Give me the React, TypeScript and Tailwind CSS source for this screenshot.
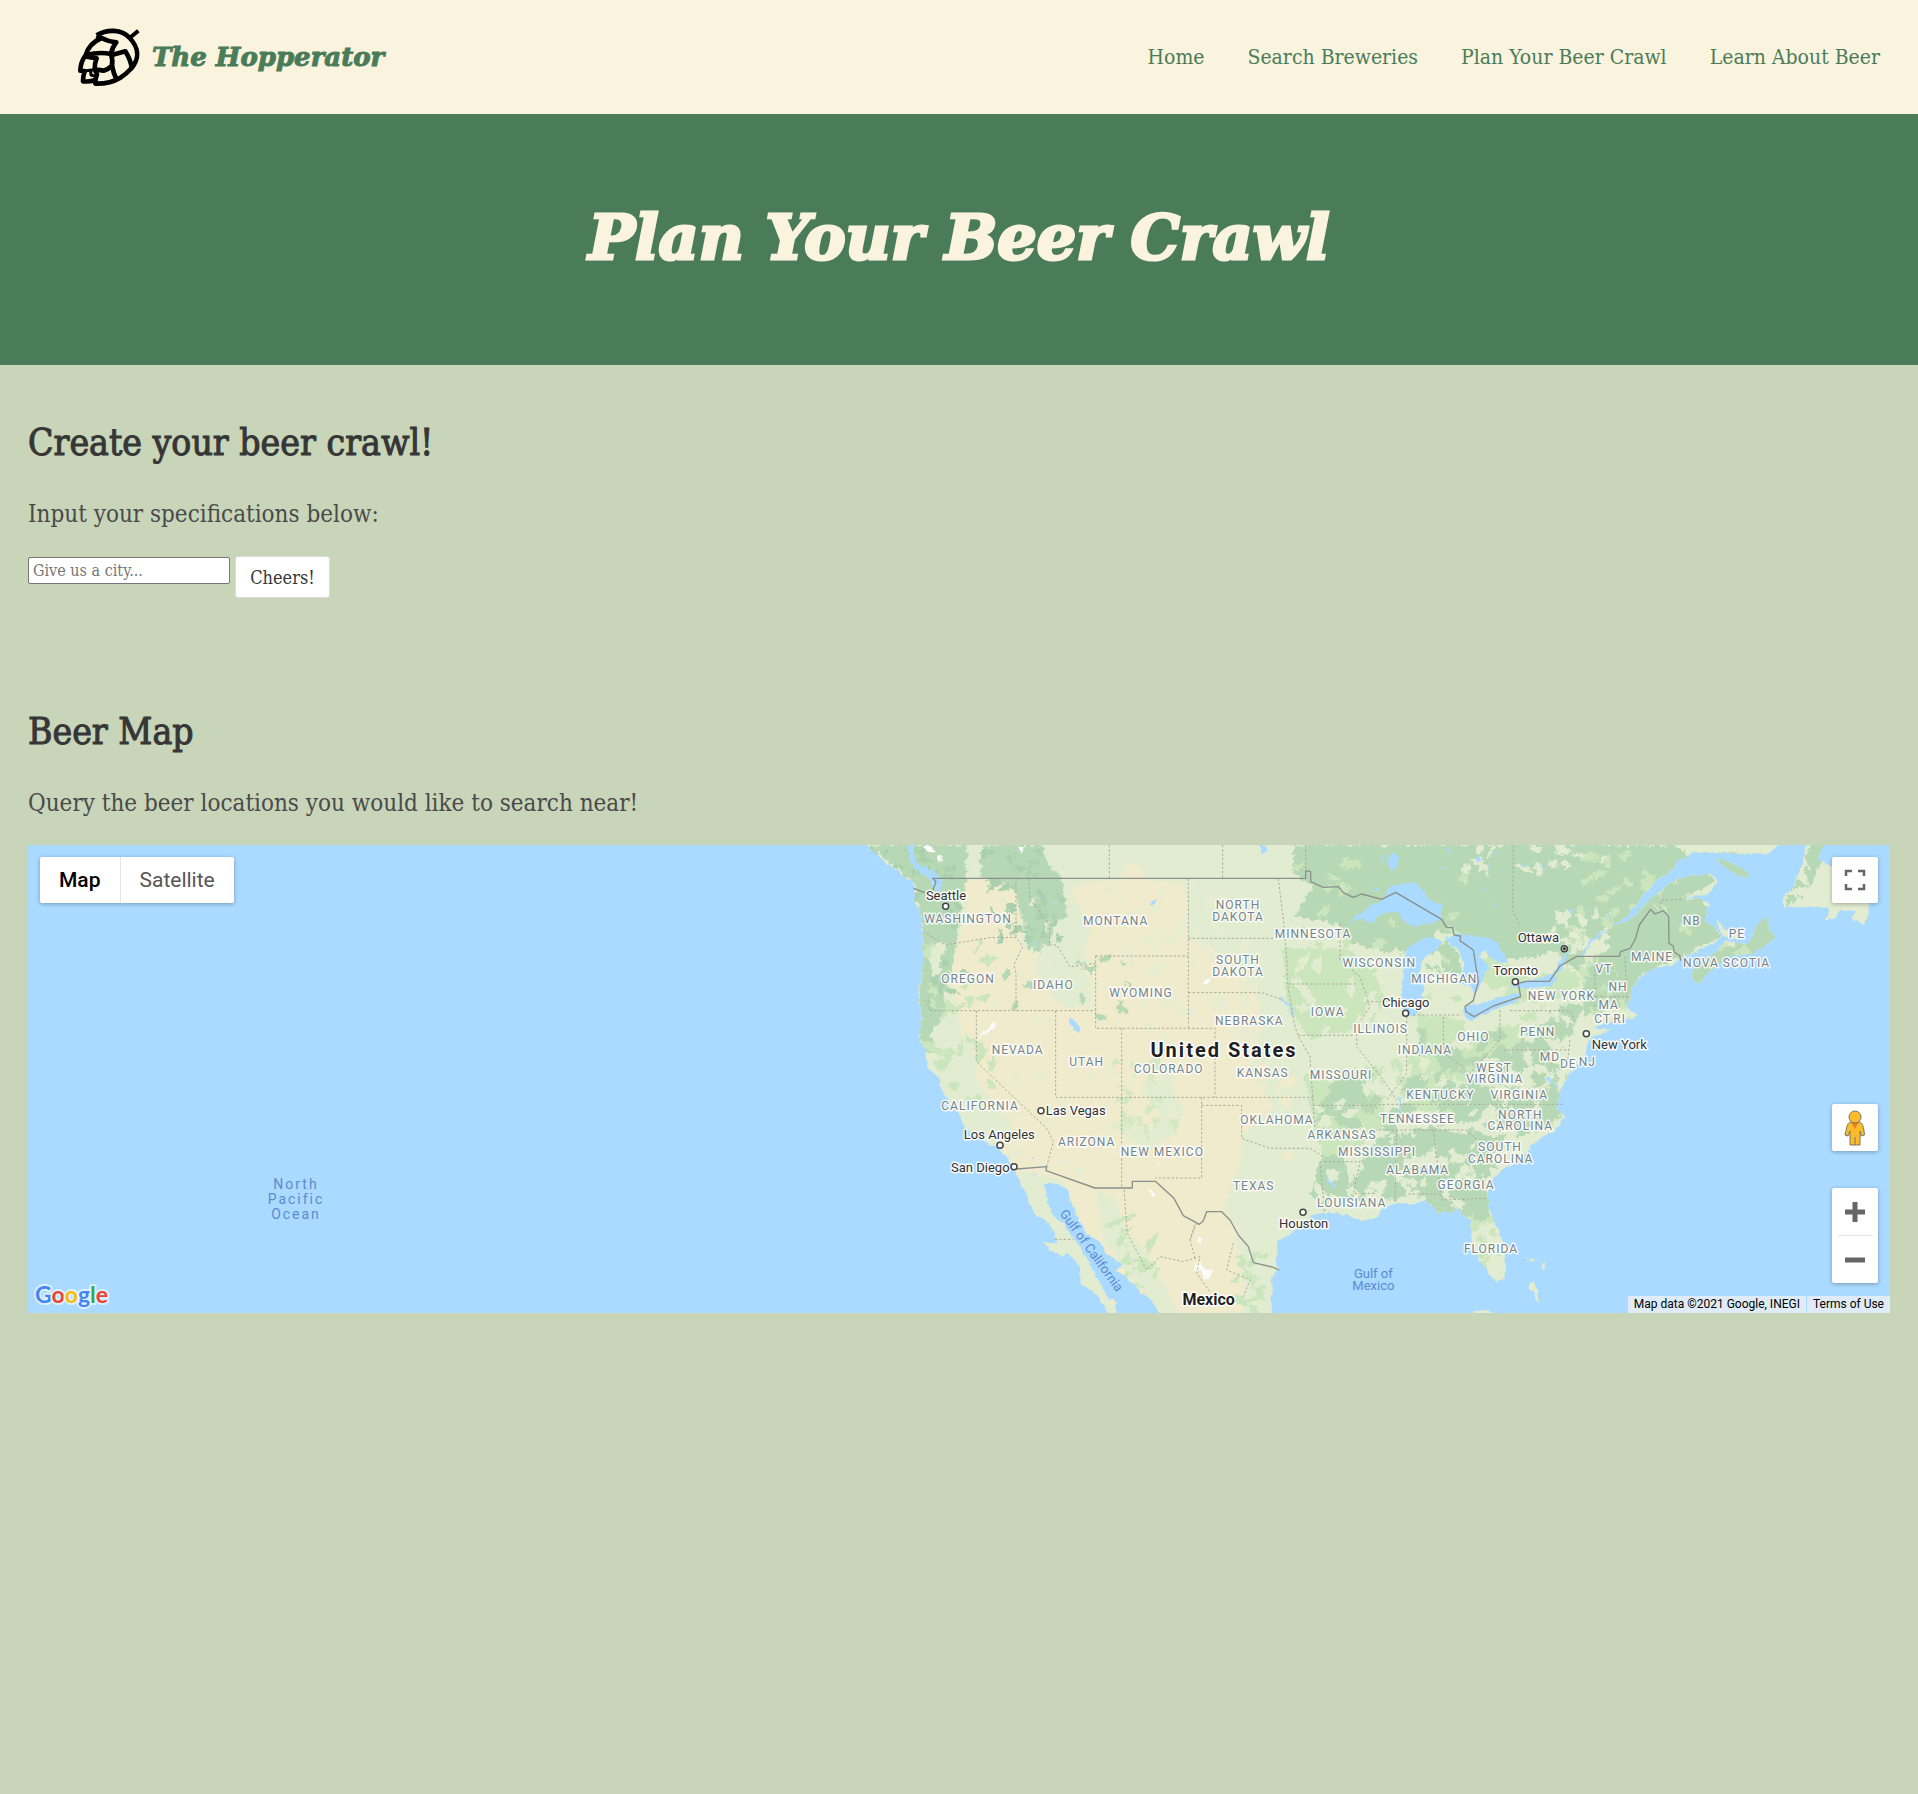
import React from "react";

const SLAB = "font-['DejaVu_Serif_Condensed','DejaVu_Serif',serif]";
const DISPLAY = "font-['DejaVu_Serif',serif] font-bold italic";
const HEADING = "text-[37px] font-normal leading-[58px] text-[#363636] [-webkit-text-stroke:1px_currentColor]";

const NAV_LINKS = ["Home", "Search Breweries", "Plan Your Beer Crawl", "Learn About Beer"];

/* ---------- Map geometry (terrain units: three per CSS pixel) ---------- */

const MAINLAND =
  "M50 15L75 40L90 52L110 72L140 92L165 112L188 125L193 150L196 185L212 215L217 250L216 280L220 310L218 380L216 410L206 438L202 470L210 500L214 530L215 560L206 582L210 605L226 630L229 668L240 690L265 715L270 738L290 770L310 800L335 838L350 868L385 893L412 910L435 918L450 932L475 958L488 985L500 1000L513 1037L530 1060L543 1097L552 1120L590 1145L615 1178L618 1205L600 1210L578 1205L600 1230L640 1252L655 1238L690 1280L692 1333L720 1350L745 1370L765 1405L775 1425L800 1425L796 1385L770 1370L755 1338L735 1300L715 1262L690 1220L665 1185L640 1152L610 1125L595 1095L590 1060L583 1030L600 1028L640 1040L656 1052L660 1085L685 1130L710 1180L750 1205L770 1240L805 1263L822 1275L800 1292L840 1320L870 1355L905 1380L930 1425L1265 1425L1265 1320L1272 1300L1285 1290L1278 1250L1282 1205L1320 1180L1350 1160L1380 1130L1420 1118L1490 1122L1520 1140L1560 1138L1585 1132L1595 1105L1640 1090L1700 1090L1725 1080L1765 1118L1800 1115L1822 1108L1860 1142L1862 1200L1890 1260L1925 1312L1945 1323L1960 1316L1968 1290L1967 1230L1950 1180L1925 1130L1914 1090L1913 1060L1930 1015L1960 985L1990 970L2030 940L2055 905L2090 885L2120 872L2142 830L2122 805L2130 750L2150 720L2165 700L2205 650L2212 612L2222 592L2285 568L2232 568L2260 552L2320 540L2365 530L2330 502L2345 450L2365 415L2410 385L2470 375L2490 358L2540 335L2590 312L2612 292L2598 262L2565 245L2565 222L2578 190L2550 175L2508 172L2570 165L2602 128L2595 108L2560 103L2505 110L2450 135L2400 180L2340 240L2278 262L2328 230L2385 160L2420 118L2470 90L2490 60L2530 38L2670 40L2760 40L2790 10L50 10Z";

const ISLANDS = [
  "M2523 400L2550 365L2605 330L2625 305L2690 312L2708 290L2725 245L2750 232L2760 275L2778 290L2750 312L2710 340L2630 352L2590 385L2545 430L2525 418Z",
  "M2598 235L2620 262L2665 285L2660 298L2615 285Z",
  "M2590 58L2640 66L2690 95L2697 110L2660 107L2630 85Z",
  "M2872 10L2925 10L2900 60L2950 80L3000 110L3060 200L3045 255L3005 238L3020 212L2970 210L2955 238L2925 240L2940 205L2860 198L2800 200L2795 182L2830 140L2855 80Z",
  "M2040 1330L2050 1325L2068 1350L2065 1385L2056 1375L2052 1350L2036 1350Z",
  "M2078 1268L2088 1262L2086 1285L2076 1288Z",
  "M2025 1255L2055 1256L2040 1262Z",
  "M1870 1414L1910 1410L1950 1425L1870 1425Z",
];

const DESERT =
  "M345 120L500 120L510 260L520 330L600 340L700 400L720 250L660 150L700 125L800 120L850 60L900 120L1010 130L1010 300L1080 320L1220 430L1230 560L1200 700L1270 800L1180 880L1170 960L1120 1110L1160 1160L1200 1250L1170 1425L800 1425L700 1160L640 1020L500 990L440 890L400 760L340 640L330 540L300 420L320 310L350 200Z";
const SPARSE_GREEN =
  "M560 340L650 330L720 420L730 500L640 500L560 420ZM760 850L830 840L900 880L930 830L870 740L960 700L1000 820L980 880L900 930ZM300 560L370 600L380 720L440 800L520 900L420 880L340 780L280 690ZM740 1050L800 1080L830 1170L900 1250L990 1425L940 1425L850 1330L760 1200ZM1150 1180L1220 1240L1260 1425L1210 1425Z";

const FOREST = [
  "M60 15L350 15L345 140L330 220L320 310L300 400L280 480L290 520L240 580L260 640L225 640L205 580L215 520L203 480L218 400L220 290L210 210L188 125Z",
  "M400 15L580 15L590 70L640 120L650 230L610 250L600 310L540 325L520 250L505 180L480 130L390 110Z",
  "M1330 15L2070 15L2480 15L2600 125L2340 245L2220 310L2190 400L2100 330L2070 350L1960 360L1940 310L1840 290L1760 270L1720 370L1600 330L1500 310L1460 250L1330 230L1390 140L1330 100Z",
  "M2280 200L2400 180L2560 170L2610 290L2490 355L2360 410L2345 490L2200 530L2200 390L2270 330Z",
  "M1420 950L1480 940L1500 1040L1560 900L1640 870L1740 860L1830 880L1930 900L1900 1000L1920 1090L1915 1150L1860 1130L1760 1115L1720 1070L1520 1080L1410 1110L1380 1060Z",
  "M1760 860L1900 720L2030 580L2140 480L2200 500L2160 580L2060 680L1990 760L1890 840Z",
  "M1460 720L1570 700L1560 770L1500 810L1400 850L1410 790Z",
  "M2500 440L2520 380L2600 330L2700 300L2720 220L2800 220L2800 320L2700 360L2560 450Z",
  "M2570 40L2720 40L2720 120L2640 120Z",
  "M1745 325L1790 305L1830 345L1835 395L1770 400L1725 385Z",
  "M2040 880L2130 830L2150 700L2110 680L2080 800L1990 900Z",
];

const MEADOW = [
  "M1300 320L1500 330L1620 460L1560 560L1380 600L1310 500Z",
  "M1620 660L1780 640L1960 560L2090 490L2000 700L1800 830L1660 800Z",
  "M1860 400L1920 340L2040 420L2150 380L2200 420L2140 480L2000 500Z",
  "M1700 520L1840 540L1860 640L1720 700Z",
  "M1360 700L1600 680L1600 900L1420 960Z",
];

const LAKES = [
  "M1495 248L1560 200L1600 175L1620 140L1690 125L1720 150L1740 180L1775 190L1775 240L1740 250L1690 262L1660 240L1640 215L1590 225L1560 255L1540 235Z",
  "M1770 300L1740 290L1700 305L1672 325L1660 370L1658 420L1655 480L1660 520L1690 528L1715 500L1720 440L1708 390L1722 350L1750 335L1775 310Z",
  "M1785 295L1830 282L1880 290L1930 292L1950 320L1975 368L1940 365L1920 350L1905 330L1888 350L1915 375L1898 420L1875 465L1862 440L1830 430L1840 370L1828 335L1810 318Z",
  "M1835 515L1860 495L1900 490L1960 468L2010 462L2000 485L1930 510L1870 540L1845 535Z",
  "M1978 440L2010 425L2070 415L2110 400L2122 420L2090 442L2010 445Z",
  "M1612 60L1625 38L1645 50L1640 85L1620 92Z",
  "M660 533L678 543L692 560L688 580L672 572L662 555Z",
  "M172 15L195 15L190 45L210 75L250 90L278 125L270 155L245 140L235 112L200 90L178 60Z",
  "M1228 15L1252 15L1250 35L1235 40Z",
  "M2125 405L2110 395L2140 350L2160 330Z",
  "M905 180L918 176L915 192L898 195Z",
  "M608 178L618 186L612 192Z",
  "M540 255L552 262L548 270ZM545 300L560 315L556 320Z",
  "M540 945L552 952L550 960ZM546 992L560 1008L552 1004Z",
];

const SALT = [
  "M385 598L400 572L420 565L428 545L440 548L425 572L405 582Z",
  "M215 20L235 15L258 35L240 40ZM262 45L275 50L270 68ZM508 20L522 22L515 42Z",
  "M895 1045L905 1050L915 1072L905 1070ZM1030 1290L1036 1272L1050 1260L1062 1285L1090 1290L1085 1305L1075 1318L1060 1310L1056 1292ZM1042 1185L1058 1200L1055 1212L1042 1205Z",
  "M1058 430L1080 412L1078 425L1062 438Z",
  "M918 962L928 965L924 978Z",
];

const BORDERS = [
  "M190 145L225 158M248 152L258 125L248 115L1367 115L1367 92L1382 95L1382 125L1420 142L1465 140L1480 158L1510 172L1535 162L1595 178L1637 157L1775 238L1790 263L1808 263L1812 285L1832 288L1830 302L1870 330L1885 425L1870 482L1845 500L1848 515L1872 530L1930 498L2012 470L2005 430L2030 424L2098 424L2130 378L2180 349L2308 349L2312 335L2340 325L2355 300L2368 255L2402 208L2415 222L2440 212L2456 230L2457 310L2470 318L2472 335L2490 348L2492 362",
  "M500 987L590 980L588 992L735 1044L847 1044L847 1024L916 1024L972 1075L1000 1127L1048 1153L1060 1142L1070 1115L1115 1115L1140 1140L1165 1185L1195 1220L1210 1268L1270 1282L1288 1290",
];

const STATE_LINES = [
  "M220 275L285 315L420 293L498 292L518 320L492 375L498 400L498 512",
  "M498 115L498 292M537 115L540 180L600 255L598 315L620 315L660 380L737 370",
  "M778 15L778 115M1015 115L1015 565M1015 295L1270 295M737 348L1015 348M737 348L737 565L1095 565L1095 690M240 512L737 512M1015 458L1235 458L1300 480",
  "M379 512L379 665L590 865L610 905L590 980M617 512L617 772L1390 772M1390 796L1560 796L1610 793L2140 793M815 565L815 1044M1055 772L1055 1014L916 1014",
  "M1095 690L1095 772M1055 796L1175 796L1175 895L1260 925L1380 925L1420 950M1118 15L1118 115M1367 15L1367 92M1285 115L1300 240L1310 350L1312 430L1335 560L1345 588L1380 650L1388 772L1395 870M1315 432L1520 432M1345 586L1510 586M1470 250L1470 360L1530 410L1560 500L1520 560L1520 620L1600 720L1640 780",
  "M1550 485L1660 485M1670 530L1670 700L1610 780M1780 530L1780 640L1840 680M1690 525L1835 525M1950 510L1950 600L1860 700M1560 870L1850 870L1880 900M1640 870L1635 1090M1750 870L1775 1080L1910 1075M1410 965L1530 965L1510 1060L1575 1060M1410 965L1425 1120M1675 1062L1770 1062",
  "M1980 512L2160 512L2175 545M1960 630L2150 630M2160 600L2150 690M2235 350L2235 540M2325 350L2330 470M2225 470L2340 470M1990 15L1988 210L2010 260M2430 205L2435 180L2500 178M822 1050L832 1180L890 1290L930 1250L1000 1265L1050 1250L1040 1300L1080 1355M1020 1200L1035 1150M615 1198L670 1198M1040 1150L1020 1200L1035 1255M1150 1210L1130 1290L1200 1320L1180 1370",
];

type Patch = { d: string; fill: string };

/* Small irregular vegetation patches, spread from a fixed seed. */
const FLECK_ZONES: Array<[number, number, number, number, number, number, string]> = [
  [1320, 60, 600, 420, 24, 13, "#cbe5bd"],
  [2180, 30, 330, 260, 26, 12, "#cbe5bd"],
  [1840, 15, 420, 70, 16, 11, "#e2ecd0"],
  [2080, 220, 200, 130, 16, 12, "#e2ecd0"],
  [1300, 300, 600, 450, 50, 16, "#e2ecd0"],
  [1400, 700, 600, 400, 70, 16, "#e2ecd0"],
  [1420, 720, 560, 300, 40, 18, "#b7d8b5"],
  [1680, 560, 460, 300, 60, 16, "#b7d8b5"],
  [1900, 440, 260, 300, 40, 14, "#e2ecd0"],
  [60, 15, 280, 500, 50, 10, "#abd0ae"],
  [400, 15, 230, 280, 36, 10, "#abd0ae"],
  [230, 300, 200, 500, 35, 12, "#cbe5bd"],
  [420, 140, 560, 420, 34, 9, "#e8ecd0"],
  [440, 260, 420, 300, 14, 10, "#b7d8b5"],
  [800, 620, 200, 270, 16, 12, "#d5e8c4"],
  [830, 130, 380, 500, 36, 16, "#e8ecd0"],
  [1030, 620, 300, 320, 30, 14, "#f1ebce"],
  [440, 680, 560, 340, 26, 11, "#e8ecd0"],
  [780, 1130, 140, 260, 18, 11, "#cbe5bd"],
  [1150, 1220, 100, 200, 14, 11, "#cbe5bd"],
  [1860, 1120, 110, 180, 14, 12, "#cbe5bd"],
  [2180, 360, 160, 200, 18, 10, "#cbe5bd"],
  [2820, 20, 240, 210, 26, 14, "#e2ecd0"],
  [2600, 290, 100, 60, 5, 10, "#cbe5bd"],
  [1380, 15, 1000, 230, 18, 4, "#aadaff"],
];

function buildFlecks(): Patch[] {
  let seed = 20210;
  const next = () => {
    seed = (seed * 16807) % 2147483647;
    return seed / 2147483647;
  };
  const patches: Patch[] = [];
  FLECK_ZONES.forEach(([x, y, w, h, count, size, fill]) => {
    for (let i = 0; i < count; i++) {
      const cx = x + next() * w;
      const cy = y + next() * h;
      const tilt = next() * Math.PI;
      const points: string[] = [];
      for (let k = 0; k < 8; k++) {
        const a = (k / 8) * Math.PI * 2;
        const r = size * (0.5 + next() * 1.1);
        const px = Math.cos(a) * r * 1.7;
        const py = Math.sin(a) * r * 0.8;
        points.push(
          `${Math.round(cx + px * Math.cos(tilt) - py * Math.sin(tilt))} ${Math.round(cy + px * Math.sin(tilt) + py * Math.cos(tilt))}`,
        );
      }
      patches.push({ d: `M${points.join("L")}Z`, fill });
    }
  });
  return patches;
}

const FLECKS = buildFlecks();

/* Labels: text, centre x, baseline y in terrain units. */
const STATES: Array<[string, number, number]> = [
  ["WASHINGTON", 354, 249], ["MONTANA", 797, 254], ["OREGON", 354, 429], ["IDAHO", 610, 446],
  ["WYOMING", 873, 472], ["NEVADA", 503, 643], ["UTAH", 710, 679], ["COLORADO", 956, 699],
  ["NORTH", 1164, 207], ["DAKOTA", 1164, 242], ["SOUTH", 1164, 373], ["DAKOTA", 1164, 408],
  ["MINNESOTA", 1389, 294], ["WISCONSIN", 1588, 380], ["MICHIGAN", 1783, 429], ["IOWA", 1433, 527],
  ["NEBRASKA", 1198, 554], ["ILLINOIS", 1592, 580], ["INDIANA", 1725, 641], ["OHIO", 1870, 602],
  ["KANSAS", 1238, 710], ["MISSOURI", 1473, 718], ["WEST", 1932, 695], ["VIRGINIA", 1934, 729],
  ["PENN", 2063, 588], ["NEW YORK", 2134, 479], ["VT", 2262, 398], ["NH", 2304, 452],
  ["MA", 2276, 508], ["CT", 2258, 549], ["RI", 2309, 549], ["MD", 2100, 663], ["DE", 2155, 684],
  ["NJ", 2212, 677], ["MAINE", 2406, 363], ["NB", 2525, 254], ["PE", 2661, 293],
  ["NOVA SCOTIA", 2630, 380], ["CALIFORNIA", 390, 811], ["ARIZONA", 710, 917],
  ["NEW MEXICO", 937, 947], ["OKLAHOMA", 1281, 851], ["ARKANSAS", 1476, 898],
  ["KENTUCKY", 1771, 777], ["VIRGINIA", 2008, 777], ["TENNESSEE", 1702, 850],
  ["NORTH", 2011, 837], ["CAROLINA", 2011, 871], ["SOUTH", 1950, 934], ["CAROLINA", 1952, 969],
  ["MISSISSIPPI", 1581, 948], ["ALABAMA", 1703, 1001], ["GEORGIA", 1848, 1047],
  ["TEXAS", 1211, 1050], ["LOUISIANA", 1505, 1102], ["FLORIDA", 1923, 1239],
];

/* Cities: text, centre x, baseline y, marker x, marker y. */
const CITIES: Array<[string, number, number, number, number]> = [
  ["Seattle", 288, 180, 287, 199], ["Toronto", 1997, 406, 1996, 425], ["Chicago", 1667, 501, 1667, 520],
  ["Ottawa", 2065, 306, 2143, 326], ["New York", 2308, 628, 2209, 581], ["Las Vegas", 677, 826, 573, 812],
  ["Los Angeles", 448, 896, 450, 916], ["San Diego", 391, 995, 492, 980], ["Houston", 1361, 1165, 1359, 1117],
];

const mx = (x: number) => 822 + x / 3;
const my = (y: number) => y / 3 - 5;

function TerrainMap() {
  return (
    <svg
      className="block h-full w-full font-[Roboto,sans-serif]"
      viewBox="0 0 1862 468"
      preserveAspectRatio="xMidYMid slice"
      role="img"
      aria-label="Map of the United States"
    >
      <defs>
        <clipPath id="land">
          <path d={MAINLAND} />
          {ISLANDS.map((d) => <path key={d} d={d} />)}
        </clipPath>
        <filter id="rough" x="-5%" y="-5%" width="110%" height="110%">
          <feTurbulence type="fractalNoise" baseFrequency="0.07" numOctaves="3" seed="4" result="n" />
          <feDisplacementMap in="SourceGraphic" in2="n" scale="22" xChannelSelector="R" yChannelSelector="G" />
        </filter>
        <filter id="coast" x="-2%" y="-2%" width="104%" height="104%">
          <feTurbulence type="fractalNoise" baseFrequency="0.15" numOctaves="2" seed="9" result="n" />
          <feDisplacementMap in="SourceGraphic" in2="n" scale="5" xChannelSelector="R" yChannelSelector="G" />
        </filter>
      </defs>
      <rect width="1862" height="468" fill="#aadaff" />
      <g filter="url(#coast)">
        <g transform="translate(822 -5) scale(.33333)" clipPath="url(#land)">
          <rect x="0" y="0" width="3100" height="1430" fill="#e2ecd0" />
          <g filter="url(#rough)">
            <path d={DESERT} fill="#f1ebce" />
            <path d={SPARSE_GREEN} fill="#e2ecd0" />
            {MEADOW.map((d) => <path key={d} d={d} fill="#cbe5bd" />)}
            {FOREST.map((d) => <path key={d} d={d} fill="#b7d8b5" />)}
            <path d="M2800 200L2860 80L2880 10L2925 10L2900 100L2860 180Z" fill="#b7d8b5" />
            {FLECKS.map((p) => <path key={p.d} d={p.d} fill={p.fill} />)}
            <path d="M245 320L270 300L290 320L270 360L275 400L250 408L240 370Z" fill="#e2ecd0" />
          </g>
        </g>
        <g transform="translate(822 -5) scale(.33333)">
          {LAKES.map((d) => <path key={d} d={d} fill="#aadaff" />)}
          {SALT.map((d) => <path key={d} d={d} fill="#fbfbfb" />)}
          <path
            d="M2190 350L2240 290L2270 270M1290 470L1320 500L1330 530M1648 770L1652 815M1430 1010L1460 1045M2090 710L2120 745M2165 690L2140 740"
            fill="none" stroke="#aadaff" strokeWidth="6"
          />
        </g>
      </g>
      <g transform="translate(822 -5) scale(.33333)" fill="none">
        {STATE_LINES.map((d) => (
          <path key={d} d={d} stroke="#a9ab9c" strokeWidth="3" strokeDasharray="7 6" />
        ))}
        {BORDERS.map((d) => <path key={d} d={d} stroke="#8b908c" strokeWidth="4" strokeLinejoin="round" />)}
      </g>

      <g textAnchor="middle" strokeLinejoin="round">
        <g className="text-[12px] tracking-[1px]" fill="#74848a" stroke="#ffffff" strokeOpacity="0.85" strokeWidth="3">
          {STATES.map(([name, x, y], i) => (
            <text key={`${name}${i}`} x={mx(x)} y={my(y)} className="[paint-order:stroke]">{name}</text>
          ))}
        </g>
        <g className="text-[13px]" fill="#333333" stroke="#ffffff" strokeOpacity="0.9" strokeWidth="3">
          {CITIES.map(([name, x, y]) => (
            <text key={name} x={mx(x)} y={my(y)} className="[paint-order:stroke]">{name}</text>
          ))}
        </g>
        <text x={mx(1122)} y={my(650)} className="text-[20px] font-bold tracking-[2px] [paint-order:stroke]" fill="#1f1f1f" stroke="#ffffff" strokeWidth="3">United States</text>
        <text x={mx(1076)} y={my(1395)} className="text-[16px] font-bold [paint-order:stroke]" fill="#1f1f1f" stroke="#ffffff" strokeWidth="3">Mexico</text>
        <g className="text-[13px]" fill="#5a8bd0">
          <g className="text-[14px] tracking-[2px]">
            <text x="268" y="344">North</text>
            <text x="268" y="359">Pacific</text>
            <text x="268" y="374">Ocean</text>
          </g>
          <text x={mx(1570)} y={my(1313)}>Gulf of</text>
          <text x={mx(1570)} y={my(1349)}>Mexico</text>
          <text transform="translate(1060 408) rotate(54)">Gulf of California</text>
        </g>
      </g>
      <g fill="#ffffff" stroke="#444444" strokeWidth="1.5">
        {CITIES.map(([name, , , x, y]) => (
          <g key={name}>
            <circle cx={mx(x)} cy={my(y)} r="3" />
            {name === "Ottawa" && <circle cx={mx(x)} cy={my(y)} r="1" fill="#222222" />}
          </g>
        ))}
      </g>
    </svg>
  );
}

function HopLogo() {
  return (
    <svg className="h-[60px] w-[63px]" viewBox="50 80 189 180" fill="none" stroke="#000" strokeWidth="14" strokeLinejoin="round" aria-hidden="true">
      <path d="M109 105C140 86 184 86 208 113C235 141 238 174 214 203C212 182 203 166 195 153L152 165" />
      <path d="M209 112L234 91" strokeWidth="12" />
      <path d="M109 105L124 113Q144 124 168 126Q156 140 152 161Q116 154 78 164" />
      <path d="M124 113C98 124 82 144 76 164C66 178 60 194 60 211L73 212Q68 228 68 243Q86 245 104 240" />
      <path d="M76 168L109 174Q102 190 103 207L130 211Q146 206 155 196Q158 180 152 161" />
      <path d="M155 196Q160 220 168 236M103 207L110 222Q104 236 105 250C134 251 160 244 180 232C196 222 206 212 214 203" />
      <path d="M73 212L100 208M91 214L92 224L106 228" strokeWidth="9" />
    </svg>
  );
}

const CONTROL = "flex items-center justify-center rounded-[2px] bg-white shadow-[0_1px_4px_rgba(0,0,0,0.3)]";

function GoogleMark() {
  return (
    <svg className="block h-[36px] w-[80px] font-[Lato,sans-serif]" viewBox="0 0 80 36" role="img" aria-label="Google">
      <text x="3" y="26" className="text-[23px] font-bold [paint-order:stroke]" stroke="#ffffff" strokeOpacity="0.6" strokeWidth="4" strokeLinejoin="round">
        <tspan fill="#4285f4">G</tspan>
        <tspan fill="#ea4335">o</tspan>
        <tspan fill="#fbbc04">o</tspan>
        <tspan fill="#4285f4">g</tspan>
        <tspan fill="#34a853">l</tspan>
        <tspan fill="#ea4335">e</tspan>
      </text>
    </svg>
  );
}

function BeerMap() {
  return (
    <div className="relative h-[468px] overflow-hidden bg-[#aadaff] font-[Roboto,sans-serif]">
      <TerrainMap />
      <div className="absolute left-3 top-3 flex h-[46px] overflow-hidden rounded-[2px] bg-white text-[21px] shadow-[0_1px_4px_rgba(0,0,0,0.3)]">
        <button className="border-r border-[#e6e6e6] px-[19px] pt-0.5 font-medium text-black">Map</button>
        <button className="px-[19px] pt-0.5 text-[#565656]">Satellite</button>
      </div>
      <button aria-label="Toggle fullscreen view" className={`absolute right-3 top-3 h-[46px] w-[46px] ${CONTROL}`}>
        <svg className="h-[22px] w-[22px]" viewBox="0 0 22 22" fill="none" stroke="#666" strokeWidth="2.5">
          <path d="M2 7V2H8M14 2H20V7M20 15V20H14M8 20H2V15" />
        </svg>
      </button>
      <div className="absolute bottom-[30px] right-3 flex flex-col gap-[37px]">
        <button aria-label="Street View Pegman" className={`h-[47px] w-[46px] ${CONTROL}`}>
          <svg className="h-[36px] w-[22px]" viewBox="0 0 22 36" stroke="#7c7460" strokeWidth="1">
            <path d="M6 12H16C18 13 19 15 20 21L20.500 25L17.500 26L16 21V35H6V21L4 26L1 25L2 21C3 15 4 13 6 12Z" fill="#fbbc2c" />
            <path d="M7 12H15L11 19Z" fill="#e67f2e" stroke="none" />
            <path d="M11 27V35" />
            <circle cx="11" cy="7" r="6" fill="#fbbc2c" />
          </svg>
        </button>
        <div className="flex h-[95px] w-[46px] flex-col items-center rounded-[2px] bg-white shadow-[0_1px_4px_rgba(0,0,0,0.3)]">
          <button aria-label="Zoom in" className="flex w-full flex-1 items-center justify-center">
            <svg className="h-[22px] w-[22px]" viewBox="0 0 22 22" stroke="#666" strokeWidth="5"><path d="M1 11H21M11 1V21" /></svg>
          </button>
          <div className="h-px w-[35px] bg-[#e6e6e6]" />
          <button aria-label="Zoom out" className="flex w-full flex-1 items-center justify-center">
            <svg className="h-[22px] w-[22px]" viewBox="0 0 22 22" stroke="#666" strokeWidth="5"><path d="M1 11H21" /></svg>
          </button>
        </div>
      </div>
      <div className="absolute bottom-0 left-1">
        <GoogleMark />
      </div>
      <div className="absolute bottom-0 right-0 flex h-[17px] gap-px text-xs leading-[17px] text-black">
        <span className="bg-[#dfecf7] px-[6px]">Map data ©2021 Google, INEGI</span>
        <a href="#terms" className="bg-[#dfecf7] px-[6px]">Terms of Use</a>
      </div>
    </div>
  );
}

export default function App() {
  return (
    <div className={`min-h-screen bg-[#c8d5b9] text-[#4a4a4a] ${SLAB}`}>
      <header className="flex h-[114px] items-center justify-between bg-[#faf3dd] pl-[77px] pr-[38px] text-[#4a7c59]">
        <a href="#home" className="flex items-center gap-3">
          <HopLogo />
          <span className={`text-[26px] leading-8 [-webkit-text-stroke:1px_currentColor] ${DISPLAY}`}>The Hopperator</span>
        </a>
        <nav className="flex gap-[43px] text-[21px] leading-8">
          {NAV_LINKS.map((label) => (
            <a key={label} href="#nav">{label}</a>
          ))}
        </nav>
      </header>

      <section className="flex h-[251px] items-center justify-center bg-[#4a7c59] pb-1 text-[#faf3dd]">
        <h1 className={`text-[62px] leading-[72px] [-webkit-text-stroke:3px_currentColor] ${DISPLAY}`}>Plan Your Beer Crawl</h1>
      </section>

      <main className="px-7">
        <section className="h-[289px] pt-[49px]">
          <h2 className={HEADING}>Create your beer crawl!</h2>
          <p className="mt-6 text-2xl leading-9">Input your specifications below:</p>
          <form className="mt-6 flex items-start gap-[5px]" onSubmit={(e) => e.preventDefault()}>
            <input
              type="text"
              aria-label="City"
              placeholder="Give us a city..."
              className="mt-px h-[27px] w-[202px] rounded-[2px] border border-[#767676] bg-white px-1 text-base placeholder:text-[#757575]"
            />
            <button className="h-[42px] w-[95px] rounded-[3px] border border-[#dbdbdb] bg-white text-[18px] text-[#363636]">Cheers!</button>
          </form>
        </section>

        <section className="pt-[49px]">
          <h2 className={HEADING}>Beer Map</h2>
          <p className="mb-6 mt-6 text-2xl leading-9">Query the beer locations you would like to search near!</p>
          <BeerMap />
        </section>
      </main>
    </div>
  );
}
